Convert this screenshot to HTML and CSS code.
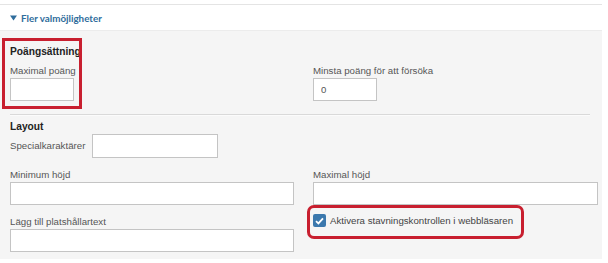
FILE: index.html
```html
<!DOCTYPE html>
<html lang="sv">
<head>
<meta charset="utf-8">
<link rel="stylesheet" href="styles.css">
</head>
<body>
<div class="wrap">
  <div class="toggle">
    <svg class="caret" width="7" height="6" viewBox="0 0 7 6"><path d="M0 0.5H7L3.5 5.5Z" fill="#2f6d9c"/></svg>
    <span>Fler valmöjligheter</span>
  </div>
  <div class="panel">
    <div class="grid top">
      <div class="cell scoring">
        <div class="title">Poängsättning</div>
        <label class="lbl">Maximal poäng</label>
        <input class="inp small" type="text">
      </div>
      <div class="cell end">
        <label class="lbl">Minsta poäng för att försöka</label>
        <input class="inp small" type="text" value="0">
      </div>
    </div>
    <div class="divider"></div>
    <div class="title layout-title">Layout</div>
    <div class="inline-row">
      <label class="lbl inline">Specialkaraktärer</label>
      <input class="inp special" type="text">
    </div>
    <div class="grid">
      <div class="cell">
        <div class="field">
          <label class="lbl">Minimum höjd</label>
          <input class="inp wide" type="text">
        </div>
        <div class="field">
          <label class="lbl">Lägg till platshållartext</label>
          <input class="inp wide" type="text">
        </div>
      </div>
      <div class="cell">
        <div class="field">
          <label class="lbl">Maximal höjd</label>
          <input class="inp wide right" type="text">
        </div>
        <label class="check">
          <span class="box"><svg width="9" height="8" viewBox="0 0 9 8"><path d="M1 4.2L3.4 6.4L8 1.4" fill="none" stroke="#fff" stroke-width="1.8"/></svg></span>
          <span>Aktivera stavningskontrollen i webbläsaren</span>
        </label>
      </div>
    </div>
  </div>
</div>
</body>
</html>
```
FILE: styles.css
```css
html, body {
  margin: 0;
  padding: 0;
  background: #ffffff;
}
body {
  font-family: "Liberation Sans", Arial, sans-serif;
  color: #333;
}
.wrap {
  width: 602px;
  margin-top: 4px;
  border-top: 1px solid #e4e4e4;
}
.toggle {
  height: 26px;
  display: flex;
  align-items: center;
  padding-left: 10px;
  gap: 4px;
  font-family: "Lato", sans-serif;
  font-weight: 700;
  font-size: 9.8px;
  color: #2f6d9c;
  border-bottom: 1px solid #ececec;
  box-sizing: border-box;
}
.caret { display: block; margin-top: 1px; }
.panel {
  background: #f5f5f5;
  padding: 14px 5px 7px 10px;
}
.grid {
  display: grid;
  grid-template-columns: 303px 1fr;
}
.cell { position: relative; }
.end { align-self: end; }
.title {
  font-weight: 700;
  font-size: 10.2px;
  line-height: 14px;
  color: #222;
}
.scoring .title { margin-bottom: 6px; }
.scoring::after {
  content: "";
  position: absolute;
  left: -8px;
  top: -7px;
  width: 80px;
  height: 71px;
  box-sizing: border-box;
  border: 3px solid #c81f2f;
}
.lbl {
  display: block;
  font-size: 9.7px;
  line-height: 12px;
  color: #555;
  margin-bottom: 1px;
}
.lbl.inline { display: inline-block; margin: 0; }
.inp {
  display: block;
  box-sizing: border-box;
  height: 23px;
  border: 1px solid #c4c4c4;
  background: #fff;
  font-family: "Liberation Sans", Arial, sans-serif;
  font-size: 9.6px;
  color: #555;
  padding: 0 7px;
  margin: 0;
  outline: none;
}
.small { width: 64px; }
.special { width: 126px; height: 24px; }
.wide { width: 284px; }
.wide.right { width: 285px; }
.divider {
  height: 1px;
  background: #d9d9d9;
  margin: 13px 7px 0 0;
  box-shadow: 0 1px 0 #fbfbfb;
}
.layout-title { margin-top: 5px; }
.inline-row {
  display: flex;
  align-items: center;
  gap: 7px;
}
.field { margin-top: 11px; }
.check {
  position: relative;
  display: flex;
  align-items: center;
  gap: 4px;
  margin-top: 9px;
  font-size: 9.7px;
  line-height: 13px;
  color: #444;
}
.check::after {
  content: "";
  position: absolute;
  left: -6px;
  top: -9px;
  width: 217px;
  height: 34px;
  box-sizing: border-box;
  border: 3px solid #c81f2f;
  border-radius: 7px;
}
.box {
  width: 13px;
  height: 13px;
  border-radius: 2px;
  background: #3b78ad;
  display: flex;
  align-items: center;
  justify-content: center;
}
.box svg { display: block; }
```
